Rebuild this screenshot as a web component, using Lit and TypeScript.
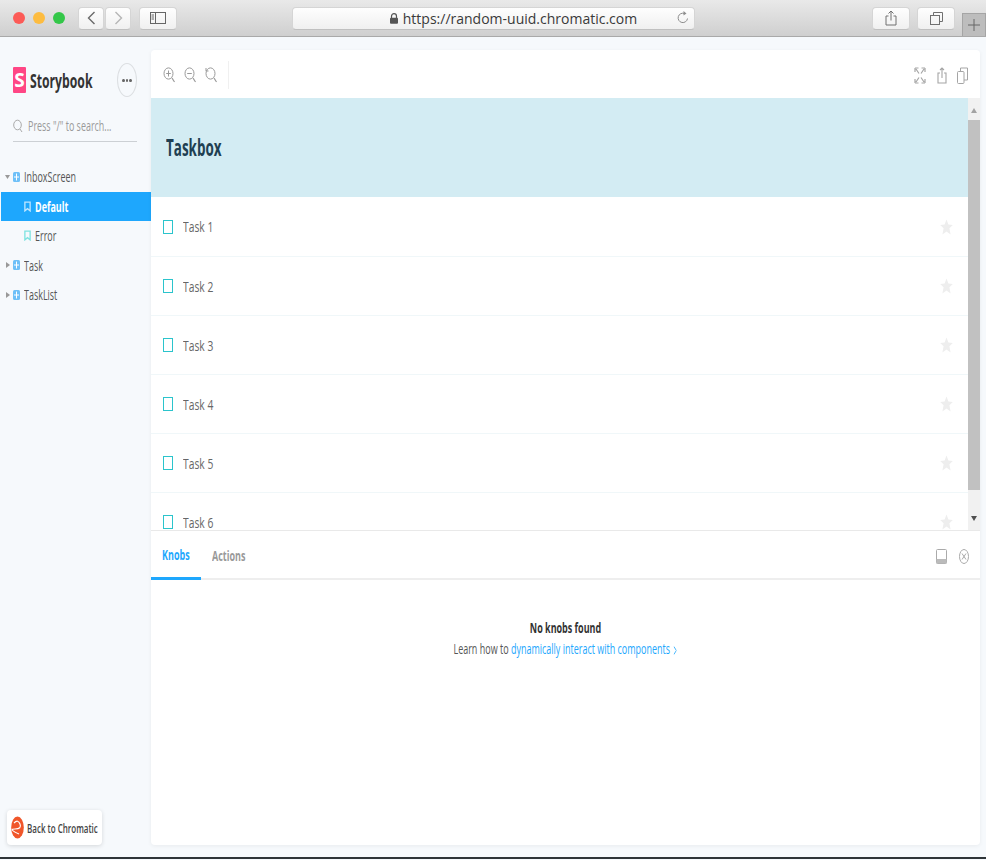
import { LitElement, css, html, svg } from 'lit';
import { customElement } from 'lit/decorators.js';

const tasks = ['Task 1', 'Task 2', 'Task 3', 'Task 4', 'Task 5', 'Task 6'];

const star = svg`<path d="M6.5 0.5 L8.4 5.6 L12.8 5.9 L9.4 9.2 L10.6 15.5 L6.5 12.4 L2.4 15.5 L3.6 9.2 L0.2 5.9 L4.6 5.6 Z" fill="#eeeeee"/>`;

const grid = (color: string) => svg`
  <rect x="0" y="0" width="7" height="10" rx="1.5" fill=${color}/>
  <path d="M3.5 1.5V8.5M1 5H6" stroke="#fff" stroke-width="1"/>`;

const bookmark = (color: string) => svg`
  <path d="M1 0.5H7V10.5L4 8L1 10.5Z" fill="none" stroke=${color} stroke-width="1.5"/>`;

const lens = (inner: unknown) => svg`
  <ellipse cx="5.5" cy="6.5" rx="4.5" ry="5.6" fill="none" stroke="#999" stroke-width="1"/>
  <path d="M9 11L11.5 15" stroke="#999" stroke-width="1.2"/>${inner}`;

@customElement('app-root')
export class AppRoot extends LitElement {
  static styles = css`
    :host {
      display: flex;
      flex-direction: column;
      height: 860px;
      overflow: hidden;
      background: #f6f9fc;
      font-family: 'Open Sans', sans-serif;
      color: #333;
    }
    svg { display: block; flex: none; }
    .squish {
      display: inline-block;
      white-space: nowrap;
      transform: scaleX(0.64);
      transform-origin: left center;
    }

    /* browser chrome */
    .chrome {
      flex: none;
      height: 37px;
      display: flex;
      align-items: center;
      box-sizing: border-box;
      padding: 0 0 0 13px;
      background: linear-gradient(#e9e9e9, #cfcfcf);
      border-bottom: 1px solid #a9a9a9;
    }
    .light { width: 12px; height: 12px; border-radius: 50%; margin-right: 8px; }
    .btn {
      height: 23px;
      box-sizing: border-box;
      background: linear-gradient(#fefefe, #f0f0f0);
      border: 1px solid #d5d5d5;
      border-bottom-color: #c0c0c0;
      border-radius: 4px;
      display: flex;
      align-items: center;
      justify-content: center;
    }
    .url {
      width: 403px;
      margin-left: 115px;
      padding-left: 39px;
      display: flex;
      justify-content: center;
      align-items: center;
      gap: 4px;
      position: relative;
      font-size: 14px;
      color: #3a3a3a;
    }
    .reload { position: absolute; right: 4px; top: 3px; }
    .newtab {
      align-self: flex-end;
      width: 24px;
      height: 23px;
      box-sizing: border-box;
      background: #bdbdbd;
      border: 1px solid #a5a5a5;
      border-bottom: none;
      display: flex;
      align-items: center;
      justify-content: center;
    }

    /* page */
    .page { flex: 1; display: flex; min-height: 0; }
    .side {
      flex: none;
      width: 151px;
      display: flex;
      flex-direction: column;
      padding-bottom: 12px;
      box-sizing: border-box;
    }
    .brand {
      display: flex;
      align-items: center;
      height: 76px;
      padding: 10px 14px 0 13px;
      box-sizing: border-box;
    }
    .logo {
      width: 13px;
      height: 26px;
      background: #ff4785;
      color: #fff;
      font-weight: 700;
      font-size: 19px;
      line-height: 26px;
      text-align: center;
      border-radius: 1px;
      flex: none;
    }
    .brandname {
      width: 74px;
      margin-left: 4px;
      font-size: 20px;
      font-weight: 700;
      color: #333;
      flex: none;
    }
    .brandname .squish { transform: scaleX(0.61); }
    .more {
      margin-left: auto;
      width: 20px;
      height: 34px;
      box-sizing: border-box;
      border: 1px solid #dcdfe2;
      border-radius: 50%;
      display: flex;
      align-items: center;
      justify-content: center;
      gap: 1px;
    }
    .more i { width: 2.5px; height: 3px; background: #666; border-radius: 50%; flex: none; }
    .search {
      margin: 0 14px 0 13px;
      height: 29px;
      border-bottom: 1px solid #ccd0d4;
      display: flex;
      align-items: center;
      gap: 5px;
      font-size: 14px;
      color: #9a9a9a;
      padding-bottom: 3px;
      box-sizing: border-box;
    }
    .tree { margin-top: 20px; display: flex; flex-direction: column; }
    .item {
      height: 29.5px;
      display: flex;
      align-items: center;
      font-size: 14px;
      color: #555;
      padding-left: 4px;
      box-sizing: border-box;
    }
    .item .arrow { width: 8px; flex: none; }
    .item .label { margin-left: 4px; }
    .item.sub { padding-left: 24px; }
    .item.active {
      margin-left: 1px;
      padding-left: 23px;
      background: #1ea7fd;
      color: #fff;
      font-weight: 700;
    }
    .back-wrap { margin-top: auto; padding-left: 7px; }
    .back {
      width: 95px;
      height: 35px;
      box-sizing: border-box;
      background: #fff;
      border-radius: 4px;
      box-shadow: 0 1px 4px rgba(0, 0, 0, 0.14);
      display: flex;
      align-items: center;
      padding-left: 4px;
      gap: 3px;
      font-size: 13px;
      font-weight: 600;
      color: #444;
    }
    .back .squish { transform: scaleX(0.615); }

    .main {
      flex: 1;
      min-width: 0;
      margin: 13px 6px 12px 0;
      background: #fff;
      border-radius: 4px;
      box-shadow: 0 1px 4px rgba(0, 0, 0, 0.06);
      display: flex;
      flex-direction: column;
      overflow: hidden;
    }
    .toolbar {
      flex: none;
      height: 48px;
      box-sizing: border-box;
      padding: 2px 12px 0 12px;
      display: flex;
      align-items: center;
      gap: 9px;
    }
    .toolbar .sep { width: 1px; height: 28px; background: #f0f0f0; margin-left: 2px; }
    .toolbar .spacer { flex: 1; }
    .toolbar .actions { display: flex; align-items: center; gap: 10.5px; }
    .preview { flex: none; height: 432px; display: flex; min-height: 0; }
    .canvas { flex: 1; min-width: 0; overflow: hidden; }
    .header {
      height: 99px;
      background: #d3ecf3;
      display: flex;
      align-items: center;
      padding: 0 0 2px 15px;
      font-size: 24px;
      font-weight: 700;
      color: #1f3f52;
      box-sizing: border-box;
    }
    .header .squish { transform: scaleX(0.56); }
    .row {
      height: 59px;
      box-sizing: border-box;
      display: flex;
      align-items: center;
      padding: 0 15px 0 12px;
      border-bottom: 1px solid #f0f7f9;
      font-size: 14.5px;
      color: #666;
    }
    .header + .row { height: 60px; }
    .row .squish { transform: scaleX(0.71); }
    .check {
      width: 10px;
      height: 14px;
      box-sizing: border-box;
      border: 1px solid #2bc4cc;
      margin-right: 10px;
      flex: none;
    }
    .row .name { flex: 1; }
    .scroll {
      flex: none;
      width: 12px;
      background: #f1f1f1;
      display: flex;
      flex-direction: column;
      align-items: center;
    }
    .thumb { width: 100%; height: 370px; background: #c1c1c1; margin: 7px 0 26px; }
    .tri-up, .tri-down { width: 0; height: 0; border-left: 3.5px solid transparent; border-right: 3.5px solid transparent; }
    .tri-up { border-bottom: 5px solid #a3a3a3; margin-top: 10px; }
    .tri-down { border-top: 5px solid #505050; }

    .panel { flex: 1; min-height: 0; display: flex; flex-direction: column; }
    .tabs {
      flex: none;
      height: 50px;
      box-sizing: border-box;
      border-top: 1px solid #e9e9e9;
      border-bottom: 2px solid #eeeeee;
      display: flex;
      align-items: stretch;
      font-size: 14.5px;
      font-weight: 700;
      color: #999;
    }
    .tabs .squish { transform: scaleX(0.62); }
    .tab { display: flex; align-items: center; padding: 1px 0 0 11px; box-sizing: border-box; }
    .tab.on {
      width: 50px;
      color: #1ea7fd;
      border-bottom: 3px solid #1ea7fd;
      margin-bottom: -2px;
    }
    .tabicons { margin-left: auto; display: flex; align-items: center; gap: 12px; padding: 3px 11px 0 0; }
    .empty {
      padding-top: 37px;
      display: flex;
      flex-direction: column;
      align-items: center;
      font-size: 14.5px;
      line-height: 21px;
      color: #555;
    }
    .empty .squish { transform: scaleX(0.62); transform-origin: center; }
    .empty b { color: #333; font-weight: 700; }
    .empty a { color: #1ea7fd; }
    .chev { display: inline-block; margin-left: 6px; width: 5px; height: 9px; vertical-align: -0.5px; }
    .edge { flex: none; height: 2px; margin-bottom: 1px; background: #2e3438; }
  `;

  private renderChrome() {
    return html`
      <div class="chrome">
        <div class="light" style="background:#fc5b57"></div>
        <div class="light" style="background:#fdbc40"></div>
        <div class="light" style="background:#34c749;margin-right:13px"></div>
        <div class="btn" style="width:26px">
          <svg width="9" height="14" viewBox="0 0 9 14"><path d="M7.5 1L1.5 7L7.5 13" fill="none" stroke="#6a6a6a" stroke-width="1.4"/></svg>
        </div>
        <div class="btn" style="width:26px;margin-left:1px;margin-right:8px">
          <svg width="9" height="14" viewBox="0 0 9 14"><path d="M1.5 1L7.5 7L1.5 13" fill="none" stroke="#b5b5b5" stroke-width="1.4"/></svg>
        </div>
        <div class="btn" style="width:38px">
          <svg width="16" height="12" viewBox="0 0 16 12"><rect x="0.5" y="0.5" width="15" height="11" fill="none" stroke="#666"/><path d="M5.5 0.5V11.5M1.5 3H4M1.5 5H4M1.5 7H4" stroke="#666" fill="none"/></svg>
        </div>
        <div class="btn url">
          <svg width="10" height="11" viewBox="0 0 10 11"><path d="M2.5 5V3.2a2.5 2.5 0 0 1 5 0V5" fill="none" stroke="#555" stroke-width="1.2"/><rect x="1" y="4.7" width="8" height="6" rx="1" fill="#555"/></svg>
          <span>https://random-uuid.chromatic.com</span>
          <svg class="reload" width="14" height="14" viewBox="0 0 14 14"><path d="M11.5 7.5a4.7 4.7 0 1 1-3-5" fill="none" stroke="#8c8c8c"/><path d="M7.5 0L10.5 2.5L7.5 4.5Z" fill="#8c8c8c"/></svg>
        </div>
        <div class="btn" style="width:38px;margin-left:auto;margin-right:7px">
          <svg width="12" height="16" viewBox="0 0 12 16"><path d="M3.5 6H1V15H11V6H8.5M6 10.5V1M3.5 3.5L6 1L8.5 3.5" fill="none" stroke="#707070"/></svg>
        </div>
        <div class="btn" style="width:38px;margin-right:7px">
          <svg width="13" height="13" viewBox="0 0 13 13"><rect x="0.5" y="3.5" width="9" height="9" fill="none" stroke="#707070"/><path d="M3.5 3.5V0.5H12.5V9.5H9.5" fill="none" stroke="#707070"/></svg>
        </div>
        <div class="newtab">
          <svg width="12" height="12" viewBox="0 0 12 12"><path d="M6 0V12M0 6H12" stroke="#666"/></svg>
        </div>
      </div>`;
  }

  private renderSidebar() {
    return html`
      <div class="side">
        <div class="brand">
          <div class="logo">S</div>
          <div class="brandname"><span class="squish">Storybook</span></div>
          <div class="more"><i></i><i></i><i></i></div>
        </div>
        <div class="search">
          <svg width="10" height="14" viewBox="0 0 10 14"><ellipse cx="4.5" cy="6" rx="3.8" ry="4.8" fill="none" stroke="#aaa"/><path d="M7 10L9 13" stroke="#aaa"/></svg>
          <span class="squish">Press "/" to search...</span>
        </div>
        <div class="tree">
          <div class="item">
            <svg class="arrow" width="8" height="6" viewBox="0 0 8 6"><path d="M1 1H6L3.5 5Z" fill="#999"/></svg>
            <svg width="7" height="10" viewBox="0 0 7 10" style="margin-left:1px">${grid('#6ec0f8')}</svg>
            <span class="label"><span class="squish">InboxScreen</span></span>
          </div>
          <div class="item sub active">
            <svg width="7" height="11" viewBox="0 0 8 11">${bookmark('#bfe6ff')}</svg>
            <span class="label"><span class="squish">Default</span></span>
          </div>
          <div class="item sub">
            <svg width="7" height="11" viewBox="0 0 8 11">${bookmark('#7fe3e0')}</svg>
            <span class="label"><span class="squish">Error</span></span>
          </div>
          ${['Task', 'TaskList'].map(name => html`
            <div class="item">
              <svg class="arrow" width="6" height="8" viewBox="0 0 6 8"><path d="M1 1V7L5 4Z" fill="#999"/></svg>
              <svg width="7" height="10" viewBox="0 0 7 10" style="margin-left:1px">${grid('#6ec0f8')}</svg>
              <span class="label"><span class="squish">${name}</span></span>
            </div>`)}
        </div>
        <div class="back-wrap">
          <div class="back">
            <svg width="13" height="23" viewBox="0 0 13 23">
              <ellipse cx="6.5" cy="11.5" rx="6.3" ry="11" fill="#f0562a"/>
              <path d="M3 7Q7 3 9 8T4 13T8 18" fill="none" stroke="#fff" stroke-width="1.2"/>
            </svg>
            <span class="squish">Back to Chromatic</span>
          </div>
        </div>
      </div>`;
  }

  private renderToolbar() {
    const icon = (inner: unknown) => html`<svg width="12" height="16" viewBox="0 0 12 16">${lens(inner)}</svg>`;
    return html`
      <div class="toolbar">
        ${icon(svg`<path d="M5.5 3.5V9.5M3.2 6.5H7.8" stroke="#999"/>`)}
        ${icon(svg`<path d="M3.2 6.5H7.8" stroke="#999"/>`)}
        ${icon(svg`<path d="M1 1V4H3.5" fill="none" stroke="#999"/>`)}
        <div class="sep"></div>
        <div class="spacer"></div>
        <div class="actions">
          <svg width="12" height="17" viewBox="0 0 12 17"><path d="M2 2L5 6.5M10 2L7 6.5M2 15L5 10.5M10 15L7 10.5M1 1V5M1 1H4.5M11 1V5M11 1H7.5M1 16V12M1 16H4.5M11 16V12M11 16H7.5" fill="none" stroke="#a5a5a5" stroke-width="1.2"/></svg>
          <svg width="10" height="17" viewBox="0 0 10 17"><path d="M3 6H1V16H9V6H7M5 11V1M3 3L5 1L7 3" fill="none" stroke="#a5a5a5" stroke-width="1.1"/></svg>
          <svg width="11" height="17" viewBox="0 0 11 17"><rect x="0.5" y="4.5" width="6.5" height="12" rx="1" fill="none" stroke="#a5a5a5"/><path d="M3.5 4.5V1H10.5V13H7" fill="none" stroke="#a5a5a5"/></svg>
        </div>
      </div>`;
  }

  private renderPreview() {
    return html`
      <div class="preview">
        <div class="canvas">
          <div class="header"><span class="squish">Taskbox</span></div>
          ${tasks.map(t => html`
            <div class="row">
              <div class="check"></div>
              <span class="name"><span class="squish">${t}</span></span>
              <svg width="13" height="16" viewBox="0 0 13 16">${star}</svg>
            </div>`)}
        </div>
        <div class="scroll">
          <div class="tri-up"></div>
          <div class="thumb"></div>
          <div class="tri-down"></div>
        </div>
      </div>`;
  }

  private renderPanel() {
    return html`
      <div class="panel">
        <div class="tabs">
          <div class="tab on"><span class="squish">Knobs</span></div>
          <div class="tab"><span class="squish">Actions</span></div>
          <div class="tabicons">
            <svg width="11" height="15" viewBox="0 0 11 15"><rect x="0.5" y="0.5" width="10" height="14" rx="1" fill="none" stroke="#aaa"/><rect x="0.5" y="10" width="10" height="4.5" fill="#bbb"/></svg>
            <svg width="10" height="15" viewBox="0 0 10 15"><ellipse cx="5" cy="7.5" rx="4.5" ry="7" fill="none" stroke="#aaa"/><path d="M3 4.5L7 10.5M7 4.5L3 10.5" stroke="#aaa"/></svg>
          </div>
        </div>
        <div class="empty">
          <span class="squish"><b>No knobs found</b></span>
          <span class="squish">Learn how to <a>dynamically interact with components<svg class="chev" viewBox="0 0 5 9"><path d="M0.5 0.5L4.5 4.5L0.5 8.5" fill="none" stroke="#1ea7fd"/></svg></a></span>
        </div>
      </div>`;
  }

  render() {
    return html`
      ${this.renderChrome()}
      <div class="page">
        ${this.renderSidebar()}
        <div class="main">
          ${this.renderToolbar()}
          ${this.renderPreview()}
          ${this.renderPanel()}
        </div>
      </div>
      <div class="edge"></div>
    `;
  }
}
